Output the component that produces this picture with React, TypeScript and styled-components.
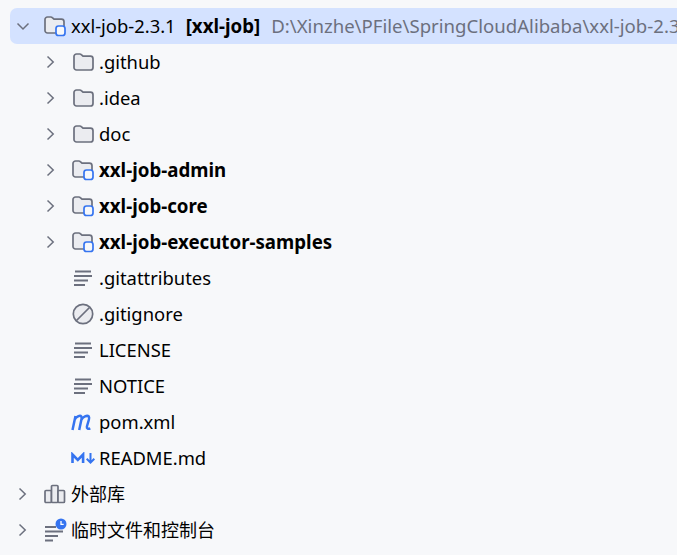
import React from "react";
import styled, { createGlobalStyle } from "styled-components";

const Global = createGlobalStyle`
  html, body { margin: 0; padding: 0; background: #f7f8fa; }
  body { width: 677px; height: 555px; overflow: hidden; }
`;

const Tree = styled.div`
  display: flex;
  flex-direction: column;
  padding: 8px 0 0 10px;
  width: 667px;
  font-family: "Noto Sans", "Noto Sans CJK SC", sans-serif;
  font-size: 18.4px;
  line-height: 24px;
  color: #000000;
`;

const Row = styled.div<{ $level: number; $selected?: boolean }>`
  display: flex;
  align-items: center;
  height: 36px;
  flex: none;
  padding-left: ${(p) => p.$level * 28}px;
  white-space: nowrap;
  overflow: hidden;
  background: ${(p) => (p.$selected ? "#d4e2ff" : "transparent")};
  border-radius: ${(p) => (p.$selected ? "7px 0 0 7px" : "0")};
`;

const ChevronSlot = styled.span`
  width: 26px;
  height: 36px;
  display: flex;
  align-items: center;
  justify-content: center;
  flex: none;
`;

const IconSlot = styled.span`
  width: 26px;
  height: 24px;
  margin-left: 6px;
  margin-right: 2px;
  flex: none;
  display: flex;
  align-items: center;
  justify-content: center;
  & > svg { display: block; }
`;

const Label = styled.span<{ $bold?: boolean; $cjk?: boolean }>`
  font-weight: ${(p) => (p.$bold ? 700 : 400)};
  font-size: ${(p) => (p.$bold ? "18.7px" : p.$cjk ? "18px" : "18.4px")};
  margin-left: 1px;
`;

const Module = styled.span`
  font-weight: 700;
  font-size: 18.7px;
  margin-left: 10px;
`;

const Path = styled.span`
  color: #6c707e;
  font-size: 18.6px;
  margin-left: 11px;
`;

const GREY = "#6c707e";
const BLUE = "#3574f0";

const ChevronRight = () => (
  <svg width="14" height="14" viewBox="0 0 14 14" fill="none">
    <path d="M3.500 1.500 9.200 7l-5.700 5.500" stroke={GREY} strokeWidth="1.500" />
  </svg>
);
const ChevronDown = () => (
  <svg width="14" height="14" viewBox="0 0 14 14" fill="none">
    <path d="M1.500 4.500 7 10l5.500-5.500" stroke={GREY} strokeWidth="1.500" />
  </svg>
);

const FolderPath =
  "M1 4.500A2.500 2.500 0 0 1 3.500 2h3.400c.5 0 1 .2 1.400.6L10 4.200h7.500A2.500 2.500 0 0 1 20 6.700v8.800a2.500 2.500 0 0 1-2.500 2.500h-14A2.500 2.500 0 0 1 1 15.500z";

const Folder = () => (
  <svg width="21" height="20" viewBox="0 0 21 20">
    <path d={FolderPath} fill="#ebecf0" stroke={GREY} strokeWidth="1.700" />
  </svg>
);
const ModuleFolder = () => (
  <svg width="22" height="22" viewBox="0 0 22 22">
    <path d={FolderPath} fill="#ebecf0" stroke={GREY} strokeWidth="1.700" />
    <rect x="12" y="11" width="9" height="9.500" rx="2.500" fill="#f7f8fa" stroke={BLUE} strokeWidth="1.700" />
  </svg>
);
const TextFile = () => (
  <svg width="20" height="18" viewBox="0 0 20 18" fill="none" stroke={GREY} strokeWidth="1.800">
    <path d="M2 2.500h16M1 7h18M1 11.500h14M1 16h11" />
  </svg>
);
const Ignored = () => (
  <svg width="22" height="22" viewBox="0 0 22 22" fill="#ebecf0" stroke={GREY} strokeWidth="1.700">
    <circle cx="11" cy="11" r="9.700" />
    <path d="M4.500 17.500 17.500 4.500" />
  </svg>
);
const Maven = () => (
  <svg width="24" height="18" viewBox="0 0 24 18" fill="none" stroke={BLUE} strokeWidth="2.500">
    <path d="M1.500 17 4.500 3M3.800 6.500C5 4 9 1.800 10.300 3.500c.7 1 .3 2.500 0 3.500L8.200 17M10.500 6.500C12 4 16 1.800 17.800 3.500c.7 1 .3 2.500 0 3.500l-1.900 6.500c-.3 1.700.9 3 3.400 1.900" />
  </svg>
);
const Markdown = () => (
  <svg width="25" height="12" viewBox="0 0 25 12" fill="none" stroke={BLUE}>
    <path d="M1.500 11V2.500L6.800 8l5.300-5.500V11" strokeWidth="2.600" />
    <path d="M19.500 1v9M15.700 6.800l3.800 3.800 3.800-3.800" strokeWidth="2" />
  </svg>
);
const Library = () => (
  <svg width="22" height="20" viewBox="0 0 22 20" fill="#ebecf0" stroke={GREY} strokeWidth="1.700">
    <rect x="1" y="6.500" width="6.500" height="12" rx="1" />
    <rect x="7.500" y="1.500" width="6.500" height="17" rx="1" />
    <rect x="14" y="6.500" width="6.500" height="12" rx="1" />
  </svg>
);
const Scratches = () => (
  <svg width="24" height="24" viewBox="0 0 24 24" fill="none">
    <path d="M2 9h11M2 13.500h18M2 18h13M2 22.500h8" stroke={GREY} strokeWidth="1.800" />
    <circle cx="18" cy="6" r="5.500" fill={BLUE} />
    <path d="M18 3v3.300h2.700" stroke="#fff" strokeWidth="1.300" />
  </svg>
);

type Item = { name: string; icon: React.ReactNode; bold?: boolean; expandable?: boolean };

const children: Item[] = [
  { name: ".github", icon: <Folder />, expandable: true },
  { name: ".idea", icon: <Folder />, expandable: true },
  { name: "doc", icon: <Folder />, expandable: true },
  { name: "xxl-job-admin", icon: <ModuleFolder />, bold: true, expandable: true },
  { name: "xxl-job-core", icon: <ModuleFolder />, bold: true, expandable: true },
  { name: "xxl-job-executor-samples", icon: <ModuleFolder />, bold: true, expandable: true },
  { name: ".gitattributes", icon: <TextFile /> },
  { name: ".gitignore", icon: <Ignored /> },
  { name: "LICENSE", icon: <TextFile /> },
  { name: "NOTICE", icon: <TextFile /> },
  { name: "pom.xml", icon: <Maven /> },
  { name: "README.md", icon: <Markdown /> },
];

export default function App() {
  return (
    <>
      <Global />
      <Tree>
        <Row $level={0} $selected>
          <ChevronSlot><ChevronDown /></ChevronSlot>
          <IconSlot><ModuleFolder /></IconSlot>
          <Label>xxl-job-2.3.1</Label>
          <Module>[xxl-job]</Module>
          <Path>D:\Xinzhe\PFile\SpringCloudAlibaba\xxl-job-2.3.1</Path>
        </Row>
        {children.map((c) => (
          <Row $level={1} key={c.name}>
            <ChevronSlot>{c.expandable && <ChevronRight />}</ChevronSlot>
            <IconSlot>{c.icon}</IconSlot>
            <Label $bold={c.bold}>{c.name}</Label>
          </Row>
        ))}
        <Row $level={0}>
          <ChevronSlot><ChevronRight /></ChevronSlot>
          <IconSlot><Library /></IconSlot>
          <Label $cjk>外部库</Label>
        </Row>
        <Row $level={0}>
          <ChevronSlot><ChevronRight /></ChevronSlot>
          <IconSlot><Scratches /></IconSlot>
          <Label $cjk>临时文件和控制台</Label>
        </Row>
      </Tree>
    </>
  );
}
